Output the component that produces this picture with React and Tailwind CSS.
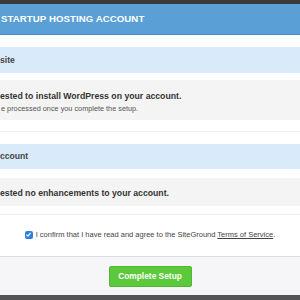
export default function App() {
  return (
    <div className="w-[300px] h-[300px] overflow-hidden flex flex-col bg-white font-['Liberation_Sans',Arial,sans-serif] text-[#333]">
      <div className="h-[4px] bg-[#3a3a3a]" />
      <div className="h-[31px] bg-[#5a9fd5] border-b border-[#4b8cc2] flex items-center pl-[1px]">
        <span className="text-white font-bold text-[9.6px] tracking-[0.1px]">STARTUP HOSTING ACCOUNT</span>
      </div>
      <div className="h-[12px]" />
      <div className="h-[26px] bg-[#d9ebfb] flex items-center">
        <span className="font-bold text-[8.6px] text-[#444]">site</span>
      </div>
      <div className="h-[7px]" />
      <div className="h-[40px] bg-[#f4f4f4] flex flex-col pt-[11px] gap-[4px]">
        <p className="font-bold text-[8.7px] text-[#333] leading-[10px]">ested to install WordPress on your account.</p>
        <p className="text-[7.3px] text-[#555] leading-[8px] pl-[1px]">e processed once you complete the setup.</p>
      </div>
      <div className="h-[12px] border-b border-[#eeeeee]" />
      <div className="h-[12px]" />
      <div className="h-[25px] bg-[#d9ebfb] flex items-center">
        <span className="font-bold text-[8.6px] text-[#444]">ccount</span>
      </div>
      <div className="h-[9px]" />
      <div className="h-[28px] bg-[#f4f4f4] pt-[10px]">
        <p className="font-bold text-[8.7px] text-[#333] leading-[10px]">ested no enhancements to your account.</p>
      </div>
      <div className="h-[9px] border-b border-[#ececec]" />
      <div className="h-[41px] flex items-center justify-center gap-[3px] pb-[2px]">
        <span className="w-[8px] h-[8px] rounded-[2px] bg-[#2f7fe0] flex items-center justify-center">
          <svg viewBox="0 0 10 10" className="w-[7px] h-[7px]">
            <path d="M2 5.2 L4.2 7.4 L8 2.6" fill="none" stroke="white" strokeWidth="1.6" />
          </svg>
        </span>
        <span className="text-[7.5px] text-[#444]">
          I confirm that I have read and agree to the SiteGround <span className="underline">Terms of Service</span>.
        </span>
      </div>
      <div className="h-[39px] bg-[#f6f6f8] border-t border-[#dcdcdc] flex items-start justify-center pt-[9px]">
        <button className="w-[83px] h-[21px] rounded-[2px] bg-[#5cc83b] border border-[#52b834] text-white font-bold text-[8.4px]">
          Complete Setup
        </button>
      </div>
      <div className="flex-1 bg-[#555]" />
    </div>
  );
}
